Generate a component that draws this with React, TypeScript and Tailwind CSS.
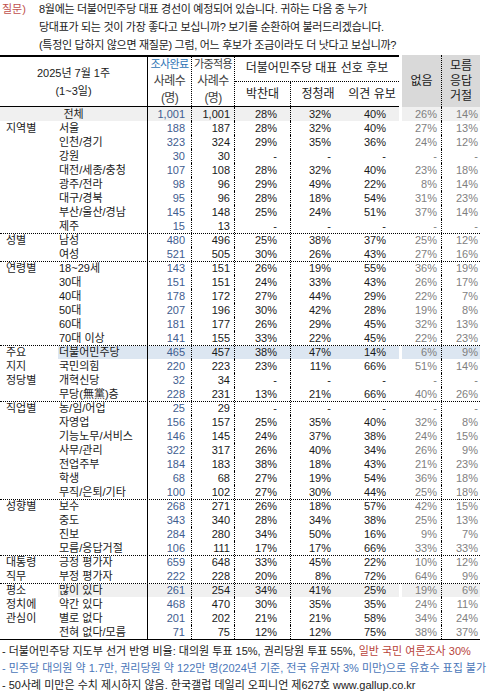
import React from 'react';

type Row = {
  g?: string;
  s: string;
  n: string;
  w: string;
  v: string[];
  sep?: boolean;
  bg?: 'gray' | 'blue';
  full?: boolean;
};

const D = ['-', '-', '-', '-', '-'];

const rows: Row[] = [
  { s: '전체', n: '1,001', w: '1,001', v: ['28%', '32%', '40%', '26%', '14%'], bg: 'gray', full: true },
  { g: '지역별', s: '서울', n: '188', w: '187', v: ['28%', '32%', '40%', '27%', '13%'] },
  { s: '인천/경기', n: '323', w: '324', v: ['29%', '35%', '36%', '24%', '12%'] },
  { s: '강원', n: '30', w: '30', v: D },
  { s: '대전/세종/충청', n: '107', w: '108', v: ['28%', '32%', '40%', '23%', '18%'] },
  { s: '광주/전라', n: '98', w: '96', v: ['29%', '49%', '22%', '8%', '14%'] },
  { s: '대구/경북', n: '95', w: '96', v: ['28%', '18%', '54%', '31%', '23%'] },
  { s: '부산/울산/경남', n: '145', w: '148', v: ['25%', '24%', '51%', '37%', '14%'] },
  { s: '제주', n: '15', w: '13', v: D },
  { g: '성별', s: '남성', n: '480', w: '496', v: ['25%', '38%', '37%', '25%', '12%'], sep: true },
  { s: '여성', n: '521', w: '505', v: ['30%', '26%', '43%', '27%', '16%'] },
  { g: '연령별', s: '18~29세', n: '143', w: '151', v: ['26%', '19%', '55%', '36%', '19%'], sep: true },
  { s: '30대', n: '151', w: '151', v: ['24%', '33%', '43%', '26%', '17%'] },
  { s: '40대', n: '178', w: '172', v: ['27%', '44%', '29%', '22%', '7%'] },
  { s: '50대', n: '207', w: '196', v: ['30%', '42%', '28%', '19%', '8%'] },
  { s: '60대', n: '181', w: '177', v: ['26%', '29%', '45%', '32%', '13%'] },
  { s: '70대 이상', n: '141', w: '155', v: ['33%', '22%', '45%', '22%', '23%'] },
  { g: '주요', s: '더불어민주당', n: '465', w: '457', v: ['38%', '47%', '14%', '6%', '9%'], sep: true, bg: 'blue' },
  { g: '지지', s: '국민의힘', n: '220', w: '223', v: ['23%', '11%', '66%', '51%', '14%'] },
  { g: '정당별', s: '개혁신당', n: '32', w: '34', v: D },
  { s: '무당(無黨)층', n: '228', w: '231', v: ['13%', '21%', '66%', '40%', '26%'] },
  { g: '직업별', s: '농/임/어업', n: '25', w: '29', v: D, sep: true },
  { s: '자영업', n: '156', w: '157', v: ['25%', '35%', '40%', '32%', '8%'] },
  { s: '기능노무/서비스', n: '146', w: '145', v: ['24%', '37%', '38%', '24%', '15%'] },
  { s: '사무/관리', n: '322', w: '317', v: ['26%', '40%', '34%', '26%', '9%'] },
  { s: '전업주부', n: '184', w: '183', v: ['38%', '18%', '43%', '21%', '23%'] },
  { s: '학생', n: '68', w: '68', v: ['27%', '19%', '54%', '36%', '18%'] },
  { s: '무직/은퇴/기타', n: '100', w: '102', v: ['27%', '30%', '44%', '25%', '18%'] },
  { g: '성향별', s: '보수', n: '268', w: '271', v: ['26%', '18%', '57%', '42%', '15%'], sep: true },
  { s: '중도', n: '343', w: '340', v: ['28%', '34%', '38%', '25%', '13%'] },
  { s: '진보', n: '284', w: '280', v: ['34%', '50%', '16%', '9%', '7%'] },
  { s: '모름/응답거절', n: '106', w: '111', v: ['17%', '17%', '66%', '33%', '33%'] },
  { g: '대통령', s: '긍정 평가자', n: '659', w: '648', v: ['33%', '45%', '22%', '10%', '12%'], sep: true },
  { g: '직무', s: '부정 평가자', n: '222', w: '228', v: ['20%', '8%', '72%', '64%', '9%'] },
  { g: '평소', s: '많이 있다', n: '261', w: '254', v: ['34%', '41%', '25%', '19%', '6%'], sep: true, bg: 'gray' },
  { g: '정치에', s: '약간 있다', n: '468', w: '470', v: ['30%', '35%', '35%', '24%', '11%'] },
  { g: '관심이', s: '별로 없다', n: '201', w: '202', v: ['21%', '21%', '58%', '34%', '24%'] },
  { s: '전혀 없다/모름', n: '71', w: '75', v: ['12%', '12%', '75%', '38%', '37%'] },
];

function bgOf(r: Row) {
  if (r.bg === 'gray') return 'bg-[#f0f0f0]';
  if (r.bg === 'blue') return 'bg-[#dce6f1]';
  return '';
}

function BodyRow({ r }: { r: Row }) {
  const bg = bgOf(r);
  return (
    <div
      className={
        'flex h-[14px] leading-[13px] ' +
        (r.sep ? 'border-t border-dotted border-black' : '')
      }
    >
      {r.full ? (
        <div className={'w-[147px] shrink-0 flex items-center justify-center ' + bg}>{r.s}</div>
      ) : (
        <>
          <div className="w-[58px] shrink-0 flex items-center pl-[6px]">{r.g}</div>
          <div className={'w-[89px] shrink-0 flex items-center pl-[1px] whitespace-nowrap ' + bg}>{r.s}</div>
        </>
      )}
      <div className={'w-[44px] shrink-0 flex items-center justify-end pr-[6px] border-l border-black text-[#3f5d8f] ' + bg}>
        {r.n}
      </div>
      <div className={'w-[43px] shrink-0 flex items-center justify-end pr-[4px] border-l border-dotted border-black ' + bg}>
        {r.w}
      </div>
      <div className={'w-[56px] shrink-0 flex items-center justify-end pr-[13px] border-l border-dotted border-black ' + bg}>
        {r.v[0]}
      </div>
      <div className={'w-[55px] shrink-0 flex items-center justify-end pr-[14px] border-l border-dotted border-black ' + bg}>
        {r.v[1]}
      </div>
      <div className={'w-[54px] shrink-0 flex items-center justify-end pr-[13px] ' + bg}>{r.v[2]}</div>
      <div className="w-[3px] shrink-0" />
      <div className={'w-[39px] shrink-0 flex items-center justify-end pr-[4px] text-[#7f7f7f] ' + bg}>{r.v[3]}</div>
      <div className={'w-[39px] shrink-0 flex items-center justify-end pr-[2px] border-l border-dotted border-black text-[#7f7f7f] ' + bg}>
        {r.v[4]}
      </div>
    </div>
  );
}

export default function App() {
  return (
    <div className="w-[496px] h-[696px] overflow-hidden bg-white text-[11px] text-[#1a1a1a] font-['Liberation_Sans','Noto_Sans_CJK_KR',sans-serif]">
      {/* Question */}
      <div className="flex h-[55px] leading-[18px] whitespace-nowrap">
        <div className="w-[39px] shrink-0 pl-[2px] text-[#c0504d]">질문)</div>
        <div className="tracking-[-0.3px]">
          <div>8월에는 더불어민주당 대표 경선이 예정되어 있습니다. 귀하는 다음 중 누가</div>
          <div>당대표가 되는 것이 가장 좋다고 보십니까? 보기를 순환하여 불러드리겠습니다.</div>
          <div>(특정인 답하지 않으면 재질문) 그럼, 어느 후보가 조금이라도 더 낫다고 보십니까?</div>
        </div>
      </div>

      {/* Table header */}
      <div className="flex h-[52px] w-[480px]">
        <div className="flex w-[399px] shrink-0 border-t-2 border-b border-black">
          <div className="w-[147px] shrink-0 flex flex-col items-center justify-center leading-[18px]">
            <div>2025년 7월 1주</div>
            <div>(1~3일)</div>
          </div>
          <div className="w-[44px] shrink-0 border-l border-black flex flex-col items-center justify-center leading-[17px] text-[#404040] whitespace-nowrap tracking-[-0.6px]">
            <div className="text-[#2e74b5]">조사완료</div>
            <div className="text-[12px]">사례수</div>
            <div className="text-[12px]">(명)</div>
          </div>
          <div className="w-[43px] shrink-0 border-l border-dotted border-black flex flex-col items-center justify-center leading-[17px] text-[#404040] whitespace-nowrap tracking-[-0.6px]">
            <div>가중적용</div>
            <div className="text-[12px]">사례수</div>
            <div className="text-[12px]">(명)</div>
          </div>
          <div className="w-[165px] shrink-0 flex flex-col border-l border-dotted border-black">
            <div className="h-[25px] shrink-0 border-b border-dotted border-black flex items-center justify-center pb-[3px] text-[12px] whitespace-nowrap">
              더불어민주당 대표 선호 후보
            </div>
            <div className="flex flex-1 text-[12px]">
              <div className="w-[55px] shrink-0 flex items-center justify-center">박찬대</div>
              <div className="w-[55px] shrink-0 flex items-center justify-center border-l border-dotted border-black">정청래</div>
              <div className="w-[54px] shrink-0 flex items-center justify-center whitespace-nowrap">의견 유보</div>
            </div>
          </div>
        </div>
        <div className="w-[3px] shrink-0" />
        <div className="flex w-[78px] shrink-0 bg-[#d9d9d9] text-[12px]">
          <div className="w-[39px] shrink-0 flex items-center justify-center">없음</div>
          <div className="w-[39px] shrink-0 border-l border-dotted border-black flex flex-col items-center justify-center leading-[15px]">
            <div>모름</div>
            <div>응답</div>
            <div>거절</div>
          </div>
        </div>
      </div>

      {/* Body */}
      <div className="w-[480px] border-b border-black">
        {rows.map((r, i) => (
          <BodyRow key={i} r={r} />
        ))}
      </div>

      {/* Footnotes */}
      <div className="pt-[3px] pl-[2px] leading-[17px] whitespace-nowrap">
        <div>
          - 더불어민주당 지도부 선거 반영 비율: 대의원 투표 15%, 권리당원 투표 55%,{' '}
          <span className="text-[#b8433a]">일반 국민 여론조사 30%</span>
        </div>
        <div className="text-[#4a76b8]">
          - 민주당 대의원 약 1.7만, 권리당원 약 122만 명(2024년 기준, 전국 유권자 3% 미만)으로 유효수 표집 불가
        </div>
        <div>- 50사례 미만은 수치 제시하지 않음. 한국갤럽 데일리 오피니언 제627호 www.gallup.co.kr</div>
      </div>
    </div>
  );
}
